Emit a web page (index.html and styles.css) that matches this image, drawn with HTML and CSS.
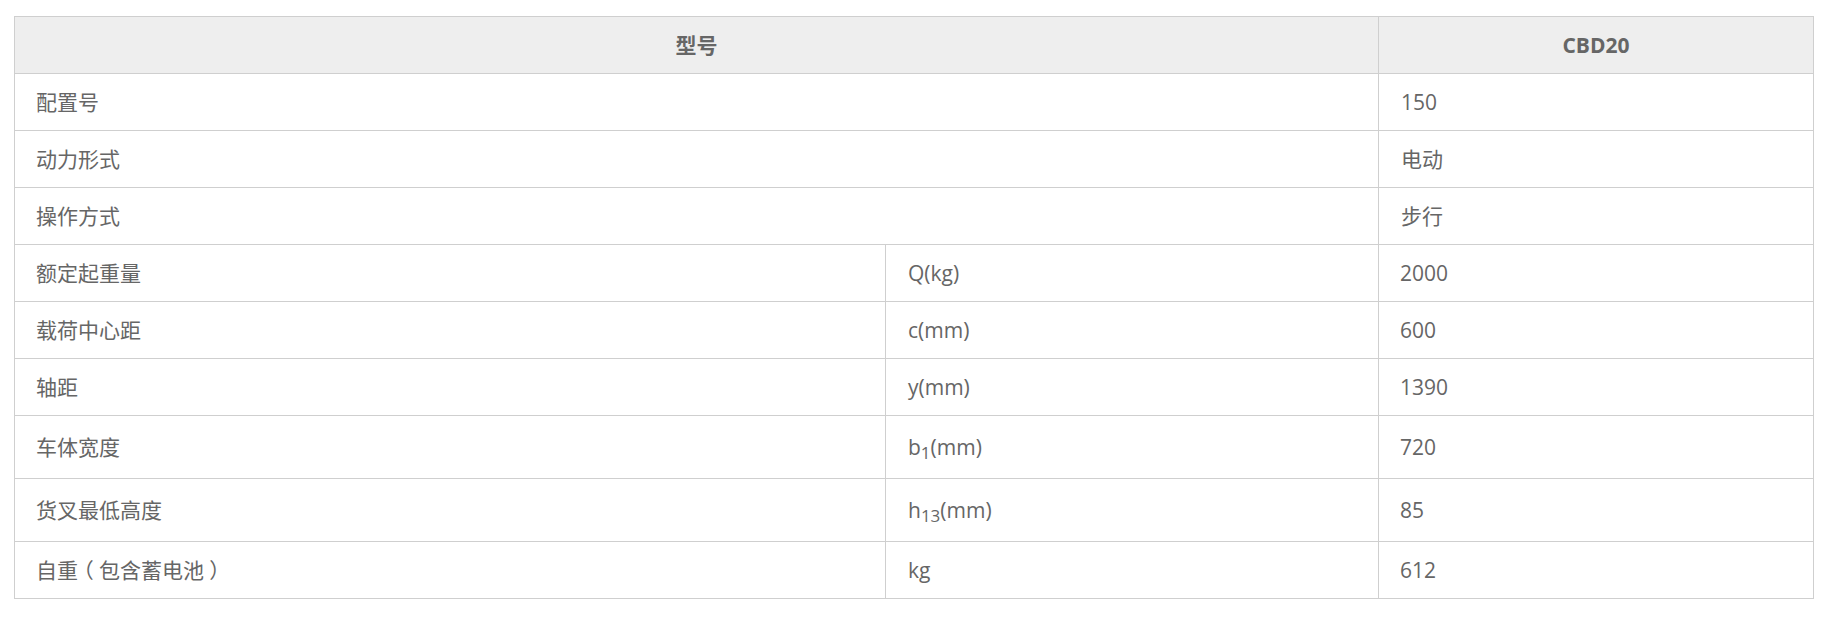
FILE: index.html
```html
<!DOCTYPE html>
<html lang="zh-CN">
<head>
<meta charset="utf-8">
<title>CBD20</title>
<link rel="stylesheet" href="styles.css">
</head>
<body>
<table class="spec">
  <colgroup>
    <col class="c1">
    <col class="c2">
    <col class="c3">
  </colgroup>
  <thead>
    <tr><th colspan="2">型号</th><th>CBD20</th></tr>
  </thead>
  <tbody>
    <tr><td colspan="2">配置号</td><td>150</td></tr>
    <tr><td colspan="2">动力形式</td><td>电动</td></tr>
    <tr><td colspan="2">操作方式</td><td>步行</td></tr>
    <tr><td>额定起重量</td><td>Q(kg)</td><td>2000</td></tr>
    <tr><td>载荷中心距</td><td>c(mm)</td><td>600</td></tr>
    <tr><td>轴距</td><td>y(mm)</td><td>1390</td></tr>
    <tr class="tall"><td>车体宽度</td><td>b<sub>1</sub>(mm)</td><td>720</td></tr>
    <tr class="tall"><td>货叉最低高度</td><td>h<sub>13</sub>(mm)</td><td>85</td></tr>
    <tr><td>自重<span class="paren">（</span>包含蓄电池<span class="paren">）</span></td><td>kg</td><td>612</td></tr>
  </tbody>
</table>
</body>
</html>
```
FILE: styles.css
```css
html, body {
  margin: 0;
  padding: 0;
  background: #ffffff;
}
body {
  padding: 16px 20px 0 14px;
  font-family: "Open Sans", "Noto Sans CJK SC", sans-serif;
  font-size: 21px;
  color: #666666;
}
.spec {
  width: 1799px;
  border-collapse: collapse;
  table-layout: fixed;
}
.c1 { width: 871px; }
.c2 { width: 493px; }
.c3 { width: 435px; }
.spec th,
.spec td {
  border: 1px solid #cfcfcf;
  line-height: 32px;
  padding: 12px 21px 12px 21px;
  text-align: left;
  vertical-align: middle;
  font-weight: normal;
}
.spec th {
  background: #eeeeee;
  text-align: center;
  font-weight: bold;
  color: #666666;
}
.spec td:nth-child(2) {
  padding-left: 22px;
}
.spec tr.tall td {
  height: 38px;
}
.spec sub {
  font-size: 17px;
  line-height: 0;
  vertical-align: -4px;
}
.paren {
  display: inline-block;
  width: 21px;
  text-align: center;
  font-feature-settings: "halt" 1;
}
```
